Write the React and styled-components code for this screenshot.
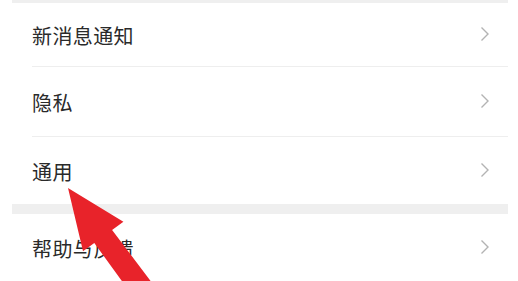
import React from "react";
import styled, { createGlobalStyle } from "styled-components";

const Global = createGlobalStyle`
  html, body { margin: 0; padding: 0; background: #fff; }
  body { font-family: "Noto Sans CJK SC", "Noto Sans", sans-serif; overflow: hidden; }
`;

const Page = styled.div`
  position: relative;
  width: 518px;
  height: 281px;
  overflow: hidden;
  background: #fff;
`;

const Band = styled.div`
  margin: 0 10px 0 12px;
  height: ${(p) => p.h}px;
  background: #efefef;
`;

const Group = styled.div`
  margin: 0 10px 0 12px;
`;

const Row = styled.div`
  box-sizing: border-box;
  height: ${(p) => p.h}px;
  display: flex;
  align-items: center;
  justify-content: space-between;
  padding: 2px 18px 0 0;
  margin-left: 20px;
  border-bottom: ${(p) => (p.last ? "none" : "1px solid #eeeeee")};
`;

const Label = styled.span`
  font-size: 20px;
  color: #2a2a2a;
  letter-spacing: 0.4px;
`;

const ChevronIcon = styled.svg`
  margin-top: -3px;
`;

const Chevron = () => (
  <ChevronIcon width="10" height="16" viewBox="0 0 10 16">
    <path d="M1.5 1.5 L8 8 L1.5 14.5" fill="none" stroke="#b3b3b3" strokeWidth="1.4" />
  </ChevronIcon>
);

const Arrow = styled.svg`
  position: absolute;
  left: 0;
  top: 0;
`;

export default function App() {
  return (
    <Page>
      <Global />
      <Band h={3} />
      <Group>
        <Row h={64}><Label>新消息通知</Label><Chevron /></Row>
        <Row h={70}><Label>隐私</Label><Chevron /></Row>
        <Row h={67} last><Label>通用</Label><Chevron /></Row>
      </Group>
      <Band h={10} />
      <Group>
        <Row h={66} last><Label>帮助与反馈</Label><Chevron /></Row>
      </Group>
      <Arrow width="518" height="281">
        <polygon
          points="68,188 123.4,221.8 112.1,230 161,294.8 141.3,307.8 94.3,243 83,251.2"
          fill="#e8232a"
        />
      </Arrow>
    </Page>
  );
}
